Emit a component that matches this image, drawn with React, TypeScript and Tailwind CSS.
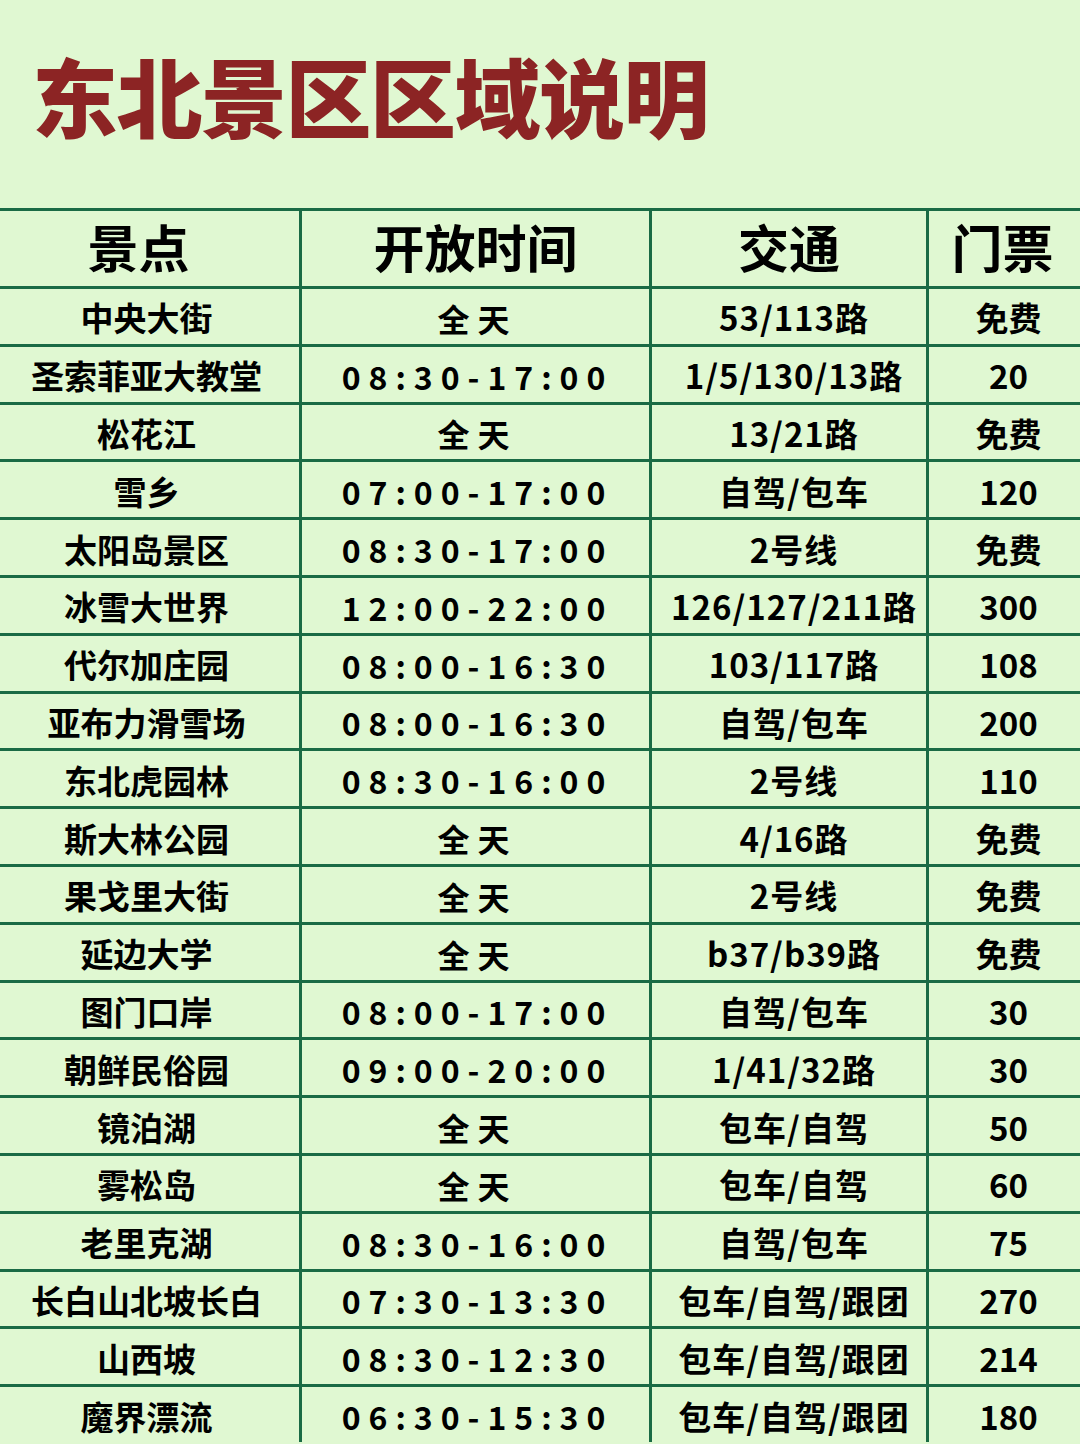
import React from "react";

const rows: [string, string, string, string][] = [
  ["中央大街", "全天", "53/113路", "免费"],
  ["圣索菲亚大教堂", "08:30-17:00", "1/5/130/13路", "20"],
  ["松花江", "全天", "13/21路", "免费"],
  ["雪乡", "07:00-17:00", "自驾/包车", "120"],
  ["太阳岛景区", "08:30-17:00", "2号线", "免费"],
  ["冰雪大世界", "12:00-22:00", "126/127/211路", "300"],
  ["代尔加庄园", "08:00-16:30", "103/117路", "108"],
  ["亚布力滑雪场", "08:00-16:30", "自驾/包车", "200"],
  ["东北虎园林", "08:30-16:00", "2号线", "110"],
  ["斯大林公园", "全天", "4/16路", "免费"],
  ["果戈里大街", "全天", "2号线", "免费"],
  ["延边大学", "全天", "b37/b39路", "免费"],
  ["图门口岸", "08:00-17:00", "自驾/包车", "30"],
  ["朝鲜民俗园", "09:00-20:00", "1/41/32路", "30"],
  ["镜泊湖", "全天", "包车/自驾", "50"],
  ["雾松岛", "全天", "包车/自驾", "60"],
  ["老里克湖", "08:30-16:00", "自驾/包车", "75"],
  ["长白山北坡长白", "07:30-13:30", "包车/自驾/跟团", "270"],
  ["山西坡", "08:30-12:30", "包车/自驾/跟团", "214"],
  ["魔界漂流", "06:30-15:30", "包车/自驾/跟团", "180"],
];

const font = { fontFamily: '"Noto Sans CJK SC", "Noto Sans", sans-serif' };

export default function App() {
  return (
    <div
      className="w-[1080px] h-[1444px] overflow-hidden bg-[#e0f8d2] text-black"
      style={font}
    >
      <div className="h-[208px] pl-[32px] pt-[52px]">
        <div className="text-[86px] leading-none font-black text-[#8c2424] tracking-[-1.5px]">
          东北景区区域说明
        </div>
      </div>
      <div className="border-t-[3px] border-[#1a6b45]">
        <div className="grid grid-cols-[299px_350px_277px_154px] h-[75px] font-bold text-[51px] leading-none">
          <div className="flex items-center justify-center pr-[22px] pb-[5px]">景点</div>
          <div className="flex items-center justify-center border-l-[3px] border-[#1a6b45] pb-[5px]">开放时间</div>
          <div className="flex items-center justify-center border-l-[3px] border-[#1a6b45] pb-[5px]">交通</div>
          <div className="flex items-center justify-center border-l-[3px] border-[#1a6b45] pr-[4px] pb-[5px]">门票</div>
        </div>
        {rows.map((r, i) => (
          <div
            key={i}
            className="grid grid-cols-[299px_350px_277px_154px] h-[57.8px] border-t-[3px] border-[#1a6b45] font-bold leading-none"
          >
            <div className="flex items-center justify-center pr-[6px] pt-[3px] text-[33px]">{r[0]}</div>
            <div className="flex items-center justify-center border-l-[3px] border-[#1a6b45] tracking-[8px] pl-[4px] pt-[3px] text-[32px]">
              {r[1]}
            </div>
            <div className="flex items-center justify-center border-l-[3px] border-[#1a6b45] pl-[10px] pt-[3px] text-[33px] tracking-[1px]">
              {r[2]}
            </div>
            <div className="flex items-center justify-center border-l-[3px] border-[#1a6b45] pl-[8px] pt-[3px] text-[33px]">{r[3]}</div>
          </div>
        ))}
      </div>
    </div>
  );
}
